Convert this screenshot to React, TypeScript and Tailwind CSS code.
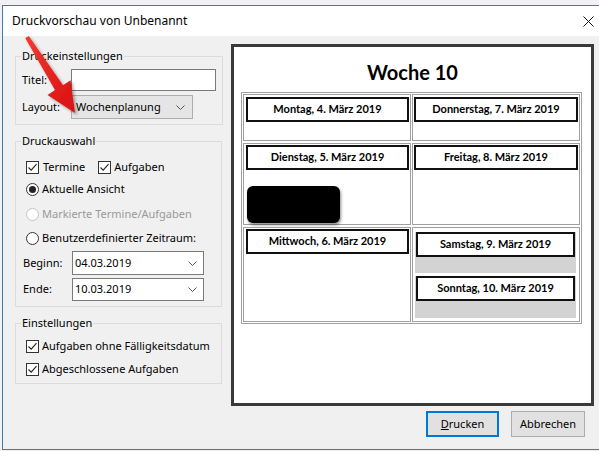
import React from "react";

const ui = { fontFamily: '"Noto Sans", "Open Sans", sans-serif' };
const cal = { fontFamily: 'Lato, "Open Sans", sans-serif' };

const Check = ({ checked }: { checked?: boolean }) => (
  <span className="w-[13px] h-[13px] shrink-0 border border-[#333] bg-white flex items-center justify-center">
    {checked && (
      <svg width="11" height="11" viewBox="0 0 11 11">
        <path d="M1.5 5.5 L4.2 8.2 L9.5 2.2" stroke="#222" strokeWidth="1.1" fill="none" />
      </svg>
    )}
  </span>
);

const Radio = ({ checked, disabled }: { checked?: boolean; disabled?: boolean }) => (
  <span
    className={`w-[13px] h-[13px] shrink-0 rounded-full border bg-white flex items-center justify-center ${
      disabled ? "border-[#c4c4c4]" : "border-[#333]"
    }`}
  >
    {checked && <span className="w-[7px] h-[7px] rounded-full bg-[#222]" />}
  </span>
);

const Chevron = () => (
  <svg width="9" height="5" viewBox="0 0 9 5">
    <path d="M0.5 0.5 L4.5 4.5 L8.5 0.5" stroke="#555" strokeWidth="1" fill="none" />
  </svg>
);

const DayBox = ({ label }: { label: string }) => (
  <div
    className="h-[25px] border-2 border-[#111] bg-white flex items-center justify-center text-[11px] font-bold text-black"
    style={cal}
  >
    {label}
  </div>
);

export default function App() {
  return (
    <div className="relative w-[599px] h-[451px] overflow-hidden bg-[#eef2f6] text-[11px] text-black" style={ui}>
      <div className="ml-[2px] mt-[5px] w-[600px] h-[445px] border-l border-t border-b border-[#3f7bab] flex flex-col">
        {/* title bar */}
        <div className="h-[30px] bg-white flex items-center justify-between pl-[9px] pr-[7px] shrink-0">
          <span className="text-[12px]">Druckvorschau von Unbenannt</span>
          <svg width="11" height="11" viewBox="0 0 11 11" className="mr-[1px]">
            <path d="M0.5 0.5 L10.5 10.5 M10.5 0.5 L0.5 10.5" stroke="#111" strokeWidth="1" />
          </svg>
        </div>

        {/* body */}
        <div className="flex-1 bg-[#f0f0f0] flex pl-[12px]">
          {/* left column */}
          <div className="w-[207px] shrink-0 mt-[12px] flex flex-col gap-[8px]">
            <fieldset className="border border-[#dcdcdc] px-[6px] pb-[5px]">
              <legend className="px-[1px] -ml-[1px] leading-[16px]">Druckeinstellungen</legend>
              <div className="flex items-center mt-[5px]">
                <span className="w-[49px]">Titel:</span>
                <div className="w-[145px] h-[22px] border border-[#7a7a7a] bg-white" />
              </div>
              <div className="flex items-center mt-[4px]">
                <span className="w-[49px]">Layout:</span>
                <div className="w-[122px] h-[24px] border border-[#adadad] bg-[#e5e5e5] flex items-center justify-between pl-[4px] pr-[7px]">
                  <span>Wochenplanung</span>
                  <Chevron />
                </div>
              </div>
            </fieldset>

            <fieldset className="border border-[#dcdcdc] pl-[10px] pr-[6px] pb-[5px]">
              <legend className="px-[1px] -ml-[5px] leading-[16px]">Druckauswahl</legend>
              <div className="h-[22px] mt-[7px] flex items-center">
                <Check checked />
                <span className="ml-[4px]">Termine</span>
                <span className="ml-[13px]"><Check checked /></span>
                <span className="ml-[3px]">Aufgaben</span>
              </div>
              <div className="h-[22px] flex items-center">
                <Radio checked />
                <span className="ml-[3px]">Aktuelle Ansicht</span>
              </div>
              <div className="h-[22px] mt-[3px] flex items-center text-[#9a9a9a]">
                <Radio disabled />
                <span className="ml-[3px]">Markierte Termine/Aufgaben</span>
              </div>
              <div className="h-[22px] mt-[2px] flex items-center">
                <Radio />
                <span className="ml-[3px]">Benutzerdefinierter Zeitraum:</span>
              </div>
              <div className="flex items-center mt-[2px] -ml-[3px]">
                <span className="w-[49px]">Beginn:</span>
                <div className="w-[132px] h-[24px] border border-[#7a7a7a] bg-white flex items-center justify-between pl-[2px] pr-[6px]">
                  <span>04.03.2019</span>
                  <Chevron />
                </div>
              </div>
              <div className="flex items-center mt-[3px] -ml-[3px]">
                <span className="w-[49px]">Ende:</span>
                <div className="w-[132px] h-[23px] border border-[#7a7a7a] bg-white flex items-center justify-between pl-[2px] pr-[6px]">
                  <span>10.03.2019</span>
                  <Chevron />
                </div>
              </div>
            </fieldset>

            <fieldset className="border border-[#dcdcdc] pl-[10px] pr-[6px] pb-[3px]">
              <legend className="px-[1px] -ml-[5px] leading-[16px]">Einstellungen</legend>
              <div className="h-[22px] mt-[4px] flex items-center">
                <Check checked />
                <span className="ml-[3px]">Aufgaben ohne Fälligkeitsdatum</span>
              </div>
              <div className="h-[22px] mt-[1px] flex items-center">
                <Check checked />
                <span className="ml-[3px]">Abgeschlossene Aufgaben</span>
              </div>
            </fieldset>
          </div>

          {/* right column */}
          <div className="ml-[9px] mt-[8px] flex flex-col">
            <div className="w-[363px] h-[362px] border-[3px] border-[#3a3a3a] bg-white flex flex-col">
              <div className="mt-[13px] h-[24px] text-center text-[20px] leading-[24px] font-bold" style={cal}>
                Woche 10
              </div>
              <div className="ml-[7px] mt-[8px] w-[341px] border border-[#a0a0a0] p-[1px] grid grid-cols-[168px_168px] gap-x-[1px] gap-y-[2px]">
                <div className="h-[47px] border border-[#a0a0a0] pt-[2px] pl-[2px] pr-[1px]">
                  <DayBox label="Montag, 4. März 2019" />
                </div>
                <div className="h-[47px] border border-[#a0a0a0] pt-[2px] pl-[1px] pr-[1px]">
                  <DayBox label="Donnerstag, 7. März 2019" />
                </div>
                <div className="h-[82px] border border-[#a0a0a0] pt-[1px] pl-[2px] pr-[1px]">
                  <DayBox label="Dienstag, 5. März 2019" />
                  <div className="mt-[16px] ml-[1px] w-[93px] h-[37px] rounded-[6px] bg-black shadow-[1px_2px_3px_rgba(0,0,0,0.45)]" />
                </div>
                <div className="h-[82px] border border-[#a0a0a0] pt-[1px] pl-[1px] pr-[1px]">
                  <DayBox label="Freitag, 8. März 2019" />
                </div>
                <div className="h-[95px] border border-[#a0a0a0] pt-[1px] pl-[2px] pr-[1px]">
                  <DayBox label="Mittwoch, 6. März 2019" />
                </div>
                <div className="h-[95px] border border-[#a0a0a0] pt-[4px] pl-[2px] pr-[3px] flex flex-col gap-[3px]">
                  <div className="h-[41px] bg-[#d3d3d3] pl-[1px] pr-[1px]">
                    <div className="h-[24px]"><DayBox label="Samstag, 9. März 2019" /></div>
                  </div>
                  <div className="h-[42px] bg-[#d3d3d3] pl-[1px] pr-[1px]">
                    <div className="h-[24px]"><DayBox label="Sonntag, 10. März 2019" /></div>
                  </div>
                </div>
              </div>
            </div>

            <div className="mt-[5px] mr-[9px] flex justify-end gap-[12px]">
              <button className="w-[73px] h-[26px] border-2 border-[#0078d7] bg-[#e1e1e1] flex items-center justify-center">
                <span><span className="underline">D</span>rucken</span>
              </button>
              <button className="w-[74px] h-[26px] border border-[#adadad] bg-[#e1e1e1] flex items-center justify-center">
                Abbrechen
              </button>
            </div>
          </div>
        </div>
      </div>

      {/* red annotation arrow */}
      <svg className="absolute left-0 top-0 pointer-events-none" width="599" height="451">
        <defs>
          <filter id="sh" x="-20%" y="-20%" width="150%" height="150%">
            <feDropShadow dx="2" dy="2" stdDeviation="1.5" floodColor="#000" floodOpacity="0.35" />
          </filter>
          <linearGradient id="rg" x1="0" y1="0" x2="1" y2="1">
            <stop offset="0" stopColor="#f23a2f" />
            <stop offset="1" stopColor="#d80f10" />
          </linearGradient>
        </defs>
        <polygon
          points="25.2,38.1 55,90 47.5,95 75,113 70.5,80.3 63,85.3 28.8,35.9"
          fill="url(#rg)"
          filter="url(#sh)"
        />
      </svg>
    </div>
  );
}
